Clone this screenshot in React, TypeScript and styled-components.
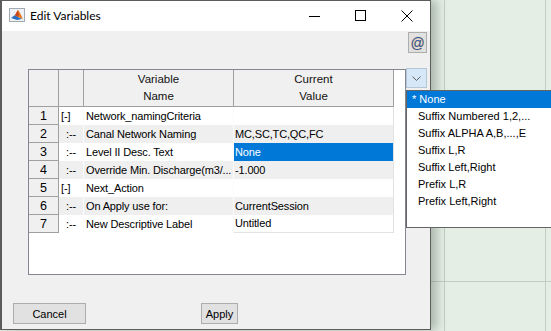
import React from "react";
import styled, { createGlobalStyle } from "styled-components";

const GlobalStyle = createGlobalStyle`
  html, body {
    margin: 0;
    padding: 0;
  }
  body {
    width: 551px;
    height: 331px;
    overflow: hidden;
    background-color: #e4eee4;
    background-image:
      linear-gradient(to right, transparent 444px, #c3cdc3 444px, #c3cdc3 445px, transparent 445px),
      linear-gradient(to right, transparent 545px, #c3cdc3 545px, #c3cdc3 546px, transparent 546px),
      linear-gradient(to bottom, transparent 281px, #c3cdc3 281px, #c3cdc3 282px, transparent 282px);
    font-family: "Liberation Sans", Arial, sans-serif;
  }
`;

type Row = {
  tree: string;
  name: string;
  value: string;
  selected?: boolean;
};

const rows: Row[] = [
  { tree: "[-]", name: "Network_namingCriteria", value: "" },
  { tree: ":--", name: "Canal Network Naming", value: "MC,SC,TC,QC,FC" },
  { tree: ":--", name: "Level II Desc. Text", value: "None", selected: true },
  { tree: ":--", name: "Override Min. Discharge(m3/...", value: "-1.000" },
  { tree: "[-]", name: "Next_Action", value: "" },
  { tree: ":--", name: "On Apply use for:", value: "CurrentSession" },
  { tree: ":--", name: "New Descriptive Label", value: "Untitled" },
];

const options = [
  "* None",
  "Suffix Numbered 1,2,...",
  "Suffix ALPHA A,B,...,E",
  "Suffix L,R",
  "Suffix Left,Right",
  "Prefix L,R",
  "Prefix Left,Right",
];

const MatlabIcon = () => (
  <svg width="16" height="16" viewBox="0 0 16 16">
    <rect x="0.5" y="1.5" width="15" height="13" fill="#eef2f6" stroke="#a3a9b0" />
    <polygon points="2,11 6,8 9,10 13,12 8,13" fill="#2b6cc4" />
    <polygon points="6,8 9,3 11,6 14,12 9,10" fill="#e8791e" />
    <polygon points="9,3 10,8 9,10 6,8" fill="#c9461a" />
  </svg>
);

const Chevron = () => (
  <svg width="9" height="5" viewBox="0 0 9 5">
    <polyline points="0.5,0.5 4.5,4.5 8.5,0.5" fill="none" stroke="#606060" strokeWidth="1" />
  </svg>
);

const App: React.FC = () => {
  return (
    <>
      <GlobalStyle />
      <Window>
        <TitleBar>
          <IconSlot>
            <MatlabIcon />
          </IconSlot>
          <Title>Edit Variables</Title>
          <Captions>
            <CaptionButton>
              <svg width="12" height="12" viewBox="0 0 12 12">
                <line x1="0" y1="6.5" x2="11" y2="6.5" stroke="#000" />
              </svg>
            </CaptionButton>
            <CaptionButton>
              <svg width="12" height="12" viewBox="0 0 12 12">
                <rect x="0.5" y="0.5" width="10" height="10" fill="none" stroke="#000" />
              </svg>
            </CaptionButton>
            <CaptionButton>
              <svg width="12" height="12" viewBox="0 0 12 12">
                <line x1="0.5" y1="0.5" x2="11.5" y2="11.5" stroke="#000" />
                <line x1="11.5" y1="0.5" x2="0.5" y2="11.5" stroke="#000" />
              </svg>
            </CaptionButton>
          </Captions>
        </TitleBar>

        <Body>
          <ToolRow>
            <AtButton>@</AtButton>
          </ToolRow>

          <TableRow>
            <TableFrame>
              <Grid>
                <HeadCell />
                <HeadCell />
                <HeadCell>
                  <span>Variable</span>
                  <span>Name</span>
                </HeadCell>
                <HeadCell>
                  <span>Current</span>
                  <span>Value</span>
                </HeadCell>
                {rows.map((r, i) => {
                  const shaded = i % 2 === 1;
                  return (
                    <React.Fragment key={i}>
                      <RowHead>{i + 1}</RowHead>
                      <TreeCell $shaded={shaded} $child={r.tree !== "[-]"}>
                        {r.tree}
                      </TreeCell>
                      <NameCell $shaded={shaded}>{r.name}</NameCell>
                      <ValueCell $shaded={shaded} $selected={!!r.selected} $last={i === rows.length - 1}>
                        {r.value}
                      </ValueCell>
                    </React.Fragment>
                  );
                })}
              </Grid>
            </TableFrame>
            <DropButton>
              <Chevron />
            </DropButton>
            <DropList>
              {options.map((o, i) => (
                <DropItem key={o} $selected={i === 0}>
                  {o}
                </DropItem>
              ))}
            </DropList>
          </TableRow>

          <Footer>
            <PushButton $width={73}>Cancel</PushButton>
            <PushButton $width={37} $offset={115}>
              Apply
            </PushButton>
          </Footer>
        </Body>
      </Window>
    </>
  );
};

const Window = styled.div`
  width: 431px;
  height: 330px;
  box-sizing: border-box;
  border: 1px solid #5c5c5c;
  border-left-width: 2px;
  display: flex;
  flex-direction: column;
  background: #f0f0f0;
  box-shadow: 6px 0 9px rgba(70, 85, 70, 0.35);
`;

const TitleBar = styled.div`
  height: 30px;
  flex: none;
  display: flex;
  align-items: center;
  background: #ffffff;
`;

const IconSlot = styled.div`
  width: 16px;
  height: 16px;
  margin-left: 7px;
  margin-bottom: 2px;
  display: flex;
`;

const Title = styled.div`
  margin-left: 5px;
  margin-bottom: 1px;
  font-family: "Segoe UI", Lato, "Liberation Sans", sans-serif;
  font-size: 12px;
  color: #000;
`;

const Captions = styled.div`
  margin-left: auto;
  display: flex;
  height: 100%;
`;

const CaptionButton = styled.div`
  width: 46px;
  height: 100%;
  display: flex;
  align-items: center;
  justify-content: center;
`;

const Body = styled.div`
  flex: 1;
  display: flex;
  flex-direction: column;
  background: #f0f0f0;
`;

const ToolRow = styled.div`
  display: flex;
  justify-content: flex-end;
  padding: 1px 3px 0 0;
`;

const AtButton = styled.div`
  width: 19px;
  height: 21px;
  box-sizing: border-box;
  border: 1px solid #adadad;
  background: #e1e1e1;
  display: flex;
  align-items: center;
  justify-content: center;
  font-family: "Liberation Sans", Arial, sans-serif;
  font-size: 14px;
  color: #2857a4;
  text-shadow: 0 0 1px #f2a040;
`;

const TableRow = styled.div`
  position: relative;
  margin-top: 16px;
  padding-left: 26px;
  display: flex;
  align-items: flex-start;
`;

const TableFrame = styled.div`
  width: 378px;
  height: 206px;
  box-sizing: border-box;
  border: 1px solid #828790;
  background: #ffffff;
`;

const Grid = styled.div`
  display: grid;
  grid-template-columns: 30px 25px 150px 160px;
  grid-template-rows: 37px;
  grid-auto-rows: 18px;
  font-family: "Liberation Sans", Arial, sans-serif;
  font-size: 11px;
  letter-spacing: -0.15px;
  color: #000;
`;

const HeadCell = styled.div`
  box-sizing: border-box;
  background: #f0f0f0;
  border-right: 1px solid #a0a0a0;
  border-bottom: 1px solid #a0a0a0;
  display: flex;
  flex-direction: column;
  align-items: center;
  justify-content: center;
  font-size: 11.5px;
  line-height: 17px;
  letter-spacing: 0;
  color: #111;
`;

const RowHead = styled.div`
  box-sizing: border-box;
  background: #f0f0f0;
  border-right: 1px solid #a0a0a0;
  border-bottom: 1px solid #a0a0a0;
  text-align: center;
  font-size: 12.5px;
  line-height: 18px;
  letter-spacing: 0;
`;

const DataCell = styled.div<{ $shaded: boolean }>`
  box-sizing: border-box;
  background: ${(p) => (p.$shaded ? "#efefef" : "#ffffff")};
  border-right: 1px solid #fbfbfb;
  line-height: 18px;
  white-space: nowrap;
  overflow: hidden;
`;

const TreeCell = styled(DataCell)<{ $child: boolean }>`
  padding-left: ${(p) => (p.$child ? 7 : 2)}px;
`;

const NameCell = styled(DataCell)`
  padding-left: 2px;
`;

const ValueCell = styled(DataCell)<{ $selected: boolean; $last: boolean }>`
  padding-left: 1px;
  border-right: 1px solid #e2e2e2;
  border-bottom: ${(p) => (p.$last ? "1px solid #e2e2e2" : "none")};
  background: ${(p) => (p.$selected ? "#0078d7" : p.$shaded ? "#efefef" : "#ffffff")};
  color: ${(p) => (p.$selected ? "#ffffff" : "#000")};
  line-height: ${(p) => (p.$last ? 17 : 18)}px;
`;

const DropButton = styled.div`
  width: 21px;
  height: 20px;
  margin-top: -1px;
  box-sizing: border-box;
  border: 1px solid #b5c6d6;
  background: #d6e7f7;
  display: flex;
  align-items: center;
  justify-content: center;
`;

const DropList = styled.div`
  position: absolute;
  left: 404px;
  top: 21px;
  width: 160px;
  height: 138px;
  box-sizing: border-box;
  border: 1px solid #646464;
  background: #ffffff;
  font-family: "Liberation Sans", Arial, sans-serif;
  font-size: 11px;
`;

const DropItem = styled.div<{ $selected: boolean }>`
  height: 17px;
  line-height: 17px;
  padding-left: ${(p) => (p.$selected ? 5 : 11)}px;
  background: ${(p) => (p.$selected ? "#0078d7" : "transparent")};
  color: ${(p) => (p.$selected ? "#ffffff" : "#000")};
  white-space: nowrap;
`;

const Footer = styled.div`
  margin-top: 28px;
  padding-left: 11px;
  display: flex;
`;

const PushButton = styled.div<{ $width: number; $offset?: number }>`
  width: ${(p) => p.$width}px;
  height: 21px;
  margin-left: ${(p) => p.$offset ?? 0}px;
  box-sizing: border-box;
  border: 1px solid #adadad;
  background: #e1e1e1;
  display: flex;
  align-items: center;
  justify-content: center;
  font-family: "Liberation Sans", Arial, sans-serif;
  font-size: 11px;
  color: #000;
`;

export default App;
